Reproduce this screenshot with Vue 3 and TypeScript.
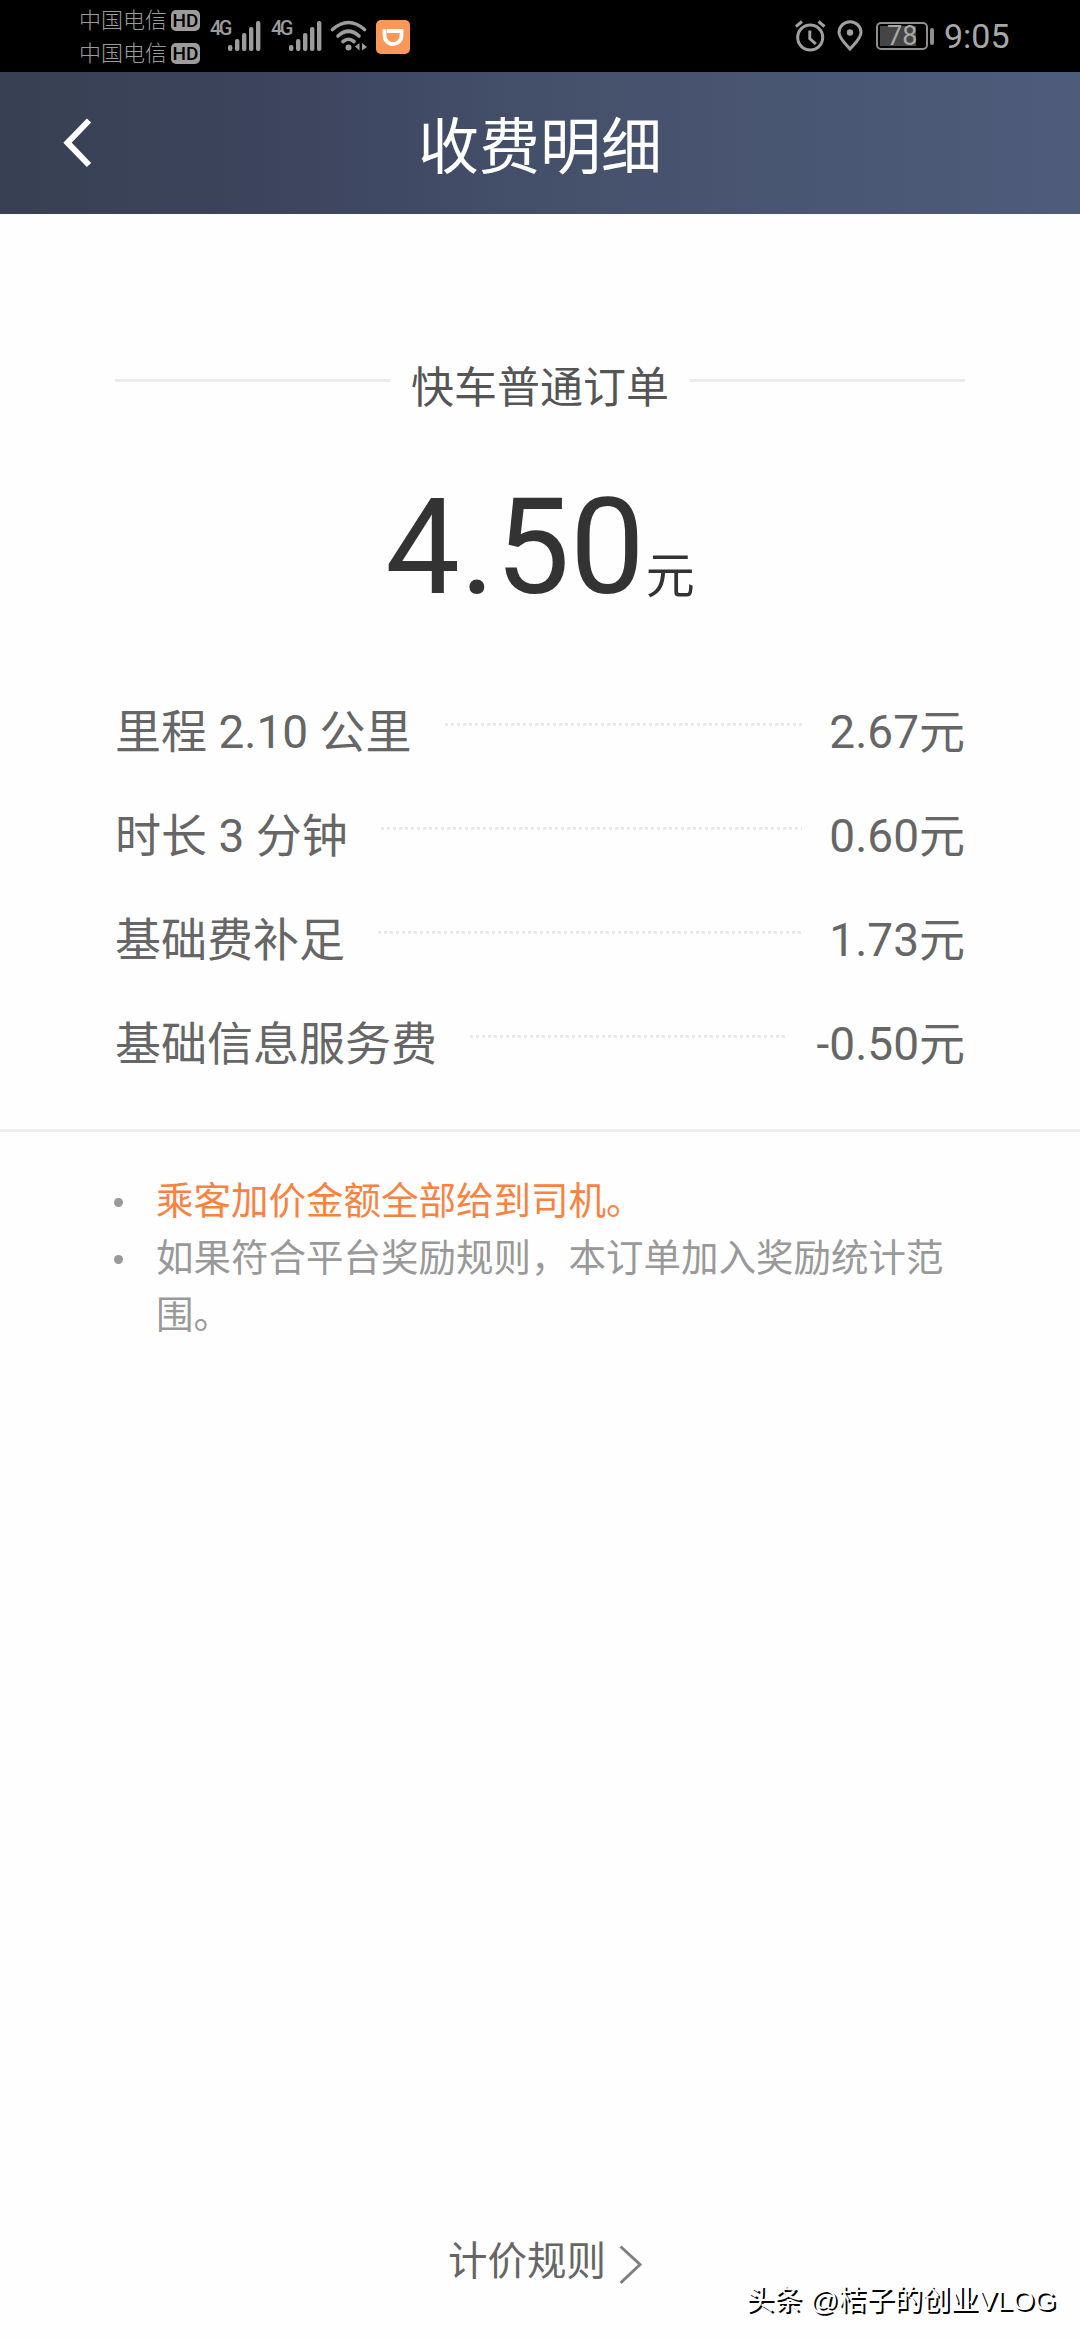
<script setup lang="ts">
interface Fee {
  label: string
  amount: string
}

const carriers: string[] = ['中国电信', '中国电信']
const bars: number[] = [6, 12, 18, 24, 30]

const fees: Fee[] = [
  { label: '里程 2.10 公里', amount: '2.67元' },
  { label: '时长 3 分钟', amount: '0.60元' },
  { label: '基础费补足', amount: '1.73元' },
  { label: '基础信息服务费', amount: '-0.50元' },
]
</script>

<template>
  <div class="screen">
    <div class="status">
      <div class="carriers">
        <div v-for="(name, i) in carriers" :key="i" class="carrier">
          <span>{{ name }}</span><span class="hd">HD</span>
        </div>
      </div>
      <div v-for="n in 2" :key="n" class="signal">
        <span class="net">4G</span>
        <svg width="33" height="32" viewBox="0 0 33 32">
          <rect v-for="(h, i) in bars" :key="i" :x="i * 7" :y="31 - h" width="4.4" :height="h" rx="2" fill="#9c9c9c" />
        </svg>
      </div>
      <svg class="wifi" width="38" height="32" viewBox="0 0 38 32" fill="none" stroke="#9c9c9c" stroke-width="3.6" stroke-linecap="round">
        <path d="M2.5 9.5Q18.500 -4.500 34.500 9.500" />
        <path d="M8 16Q18.500 6.500 29 16" />
        <path d="M13 21.500Q18.500 17 24 21.500" />
        <circle cx="18.500" cy="27.500" r="3" fill="#9c9c9c" stroke="none" />
        <path d="M29.500 23v7.500l-4.500-4zM32 30.500V23l5 4z" fill="#9c9c9c" stroke="none" />
      </svg>
      <svg class="didi" width="34" height="34" viewBox="0 0 34 34">
        <rect width="34" height="34" rx="5" fill="#fb9757" />
        <path d="M11 11H25.500V15.500A8.500 8.700 0 0 1 8.500 15.500V9.200" fill="none" stroke="#fff" stroke-width="3.800" />
      </svg>
      <div class="right">
        <svg width="31" height="32" viewBox="0 0 31 32" fill="none" stroke="#a0a0a0" stroke-width="3">
          <circle cx="15.200" cy="17.500" r="12.500" />
          <path d="M14.800 10.500v8l6 5.500M1 6.500L7 1.500M29.500 6.500L23.500 1.500" />
        </svg>
        <svg class="pin" width="26" height="32" viewBox="0 0 26 32">
          <path d="M13 29C8 23.500 2 18 2 12.500a11 10.800 0 0 1 22 0C24 18 18 23.500 13 29z" fill="none" stroke="#a0a0a0" stroke-width="3" />
          <circle cx="13" cy="12.500" r="3.200" fill="#a0a0a0" />
        </svg>
        <div class="battery"><span>78</span></div>
        <i class="cap"></i>
        <span class="time">9:05</span>
      </div>
    </div>

    <header class="header">
      <svg class="back" width="30" height="50" viewBox="0 0 30 50">
        <path d="M26 2.500L4.500 24.700L26 47" fill="none" stroke="#fff" stroke-width="6" />
      </svg>
      <h1>收费明细</h1>
    </header>

    <main class="bill">
      <div class="kind"><i></i><span>快车普通订单</span><i></i></div>
      <div class="total"><span class="num">4.50</span><span class="unit">元</span></div>
      <div class="fees">
        <div v-for="fee in fees" :key="fee.label" class="fee">
          <span>{{ fee.label }}</span>
          <i class="dots"></i>
          <span>{{ fee.amount }}</span>
        </div>
      </div>
    </main>

    <ul class="notes">
      <li class="hot"><span>乘客加价金额全部给到司机。</span></li>
      <li><span>如果符合平台奖励规则，本订单加入奖励统计范围。</span></li>
    </ul>

    <footer class="rules">
      <span>计价规则</span>
      <svg width="26" height="42" viewBox="0 0 26 42">
        <path d="M2.500 2.500L22 20.500L2.500 39" fill="none" stroke="#808080" stroke-width="3" />
      </svg>
    </footer>

    <div class="mark">头条 @桔子的创业VLOG</div>
  </div>
</template>

<style>
body {
  margin: 0;
  background: #fff;
}
</style>

<style scoped>
.screen {
  position: relative;
  display: flex;
  flex-direction: column;
  box-sizing: border-box;
  width: 1080px;
  height: 2340px;
  overflow: hidden;
  background: #fefefe;
  font-family: Roboto, "Noto Sans CJK SC", sans-serif;
  color: #666;
}
.status {
  display: flex;
  align-items: flex-start;
  box-sizing: border-box;
  height: 72px;
  padding-left: 79px;
  background: #000;
  color: #9c9c9c;
}
.carriers {
  width: 131px;
  padding-top: 4px;
}
.carrier {
  display: flex;
  align-items: center;
  height: 33px;
  font-size: 22px;
  line-height: 33px;
  font-weight: 300;
}
.hd {
  width: 29px;
  height: 21px;
  margin-left: 4px;
  border-radius: 5px;
  background: #9c9c9c;
  color: #000;
  font-size: 19px;
  font-weight: 500;
  line-height: 21px;
  text-align: center;
}
.signal {
  display: flex;
  width: 61px;
  padding-top: 20px;
}
.net {
  width: 18px;
  font-size: 20px;
  line-height: 16px;
  font-weight: 500;
  letter-spacing: -2.500px;
}
.signal svg {
  flex: none;
}
.wifi {
  margin-top: 20px;
  margin-left: -2px;
}
.didi {
  margin: 20px 0 0 8px;
}
.right {
  display: flex;
  align-items: center;
  height: 72px;
  margin-left: 385px;
  color: #a8a8a8;
}
.pin {
  margin-left: 11px;
}
.battery {
  box-sizing: border-box;
  width: 52px;
  height: 28px;
  margin-left: 13px;
  padding: 2px;
  border: 2px solid #8e8e8e;
  border-radius: 5px;
}
.battery span {
  display: block;
  width: 36px;
  background: #454545;
  font-size: 27px;
  line-height: 20px;
  text-indent: 7px;
}
.cap {
  width: 4px;
  height: 17px;
  margin-left: 2px;
  border-radius: 2px;
  background: #8e8e8e;
}
.time {
  margin-left: 10px;
  font-size: 34px;
  line-height: 40px;
}
.header {
  display: flex;
  align-items: center;
  height: 142px;
  background: linear-gradient(90deg, #384053 0%, #3d455f 28%, #46526c 55%, #4e5b7a 100%);
  color: #fff;
}
.back {
  margin-left: 63px;
}
h1 {
  margin: 9px 0 0 325px;
  font-size: 61px;
  font-weight: 400;
  line-height: 80px;
}
.bill {
  box-sizing: border-box;
  height: 918px;
  padding: 140px 115px 0;
  border-bottom: 3px solid #eee;
}
.kind {
  display: flex;
  align-items: flex-start;
  height: 64px;
  font-size: 43px;
  line-height: 68px;
  color: #555;
}
.kind i {
  flex: 1;
  height: 3px;
  margin-top: 25px;
  background: #ebebeb;
}
.kind span {
  margin: 0 21px;
}
.total {
  display: flex;
  justify-content: center;
  align-items: baseline;
  height: 160px;
  margin-top: 50px;
  color: #333;
}
.num {
  font-size: 133px;
  line-height: 160px;
}
.unit {
  margin-left: 1px;
  font-size: 49px;
}
.fees {
  margin-top: 64px;
}
.fee {
  display: flex;
  height: 104px;
  font-size: 46px;
  line-height: 81px;
}
.dots {
  flex: 1;
  height: 3px;
  margin: 31px 27px 0 33px;
  background: repeating-linear-gradient(90deg, #e8e8e8 0 3px, transparent 3px 6px);
}
.fee:last-child .dots {
  margin-right: 32px;
}
.notes {
  margin: 0;
  padding: 41px 122px 0 114px;
  list-style: none;
  font-size: 37.500px;
  line-height: 57px;
  color: #999;
}
.notes li {
  display: flex;
}
.notes li::before {
  content: "";
  flex: none;
  width: 9px;
  height: 9px;
  margin: 25px 33px 0 0;
  border-radius: 50%;
  background: #999;
}
.hot span {
  color: #fa8240;
}
.rules {
  display: flex;
  align-items: center;
  height: 60px;
  margin: auto 0 48px 448px;
  font-size: 39.500px;
  line-height: 60px;
}
.rules svg {
  margin: 6px 0 0 12px;
}
.mark {
  position: absolute;
  right: 24px;
  bottom: 19px;
  font-family: "Liberation Sans", "Noto Sans CJK SC", sans-serif;
  font-size: 28px;
  line-height: 40px;
  color: #fff;
  text-shadow: 2px 2px 0 #000;
  white-space: nowrap;
}
</style>
